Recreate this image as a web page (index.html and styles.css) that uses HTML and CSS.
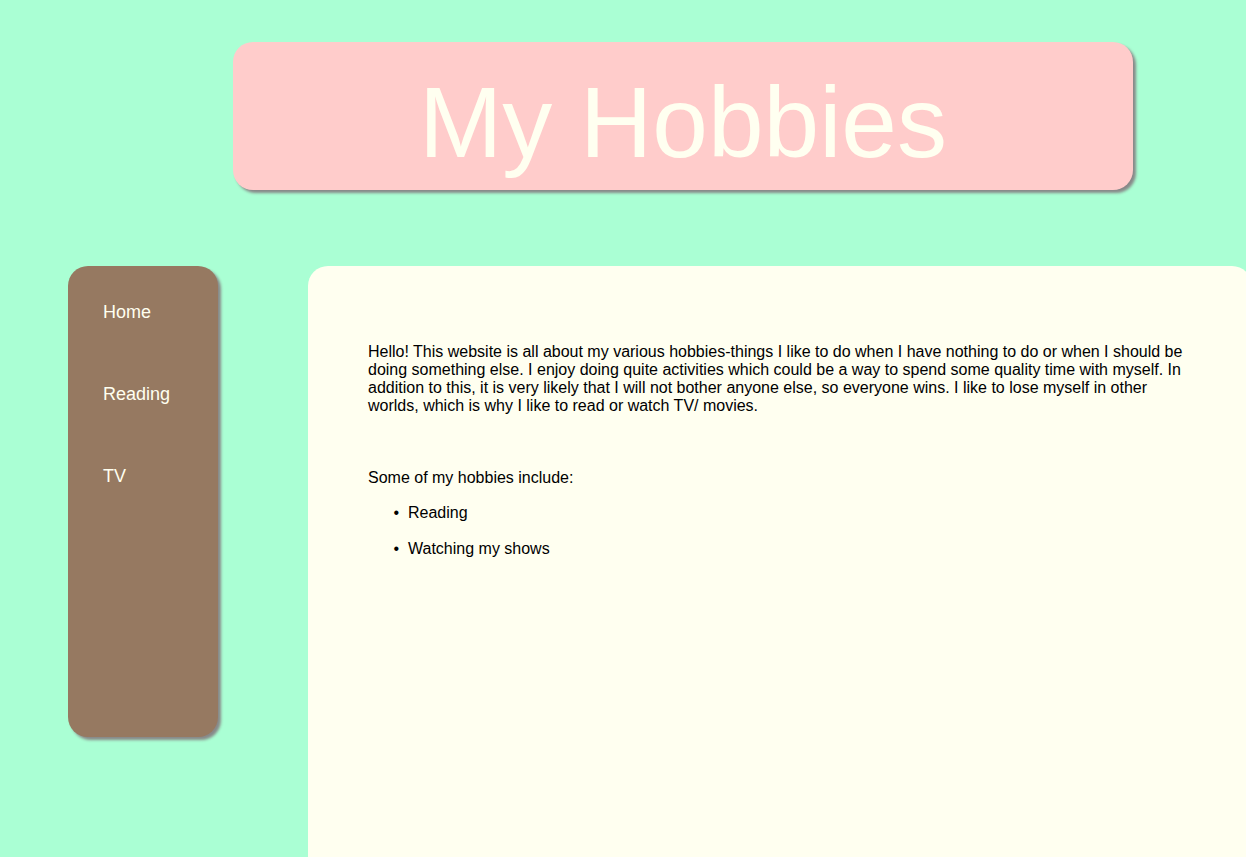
FILE: index.html
```html
<!DOCTYPE html>
<html>
<head>
<meta charset="utf-8">
<title>My Hobbies</title>
<link rel="stylesheet" href="styles.css">
</head>
<body>
<header class="banner">
  <h1 class="banner-title">My Hobbies</h1>
</header>
<div class="layout">
  <nav class="sidebar">
    <a class="nav-link" href="#">Home</a>
    <a class="nav-link" href="#">Reading</a>
    <a class="nav-link" href="#">TV</a>
  </nav>
  <main class="content">
    <p class="intro">Hello! This website is all about my various hobbies-things I like to do when I have nothing to do or when I should be doing something else. I enjoy doing quite activities which could be a way to spend some quality time with myself. In addition to this, it is very likely that I will not bother anyone else, so everyone wins. I like to lose myself in other worlds, which is why I like to read or watch TV/ movies.</p>
    <p class="lead">Some of my hobbies include:</p>
    <ul class="hobby-list">
      <li>Reading</li>
      <li>Watching my shows</li>
    </ul>
  </main>
</div>
</body>
</html>
```
FILE: styles.css
```css
html, body {
  margin: 0;
  padding: 0;
}
body {
  background: #aaffd4;
  font-family: "Liberation Sans", Arial, sans-serif;
  overflow: hidden;
  height: 857px;
}
.banner {
  box-sizing: border-box;
  width: 900px;
  height: 148px;
  margin: 42px 0 0 233px;
  background: #ffcccb;
  border-radius: 20px;
  box-shadow: 3px 3px 3px #888888;
  display: flex;
  align-items: center;
  justify-content: center;
  padding-top: 12px;
}
.banner-title {
  margin: 0;
  font-weight: normal;
  font-size: 100px;
  color: #fffff0;
  line-height: 1.15;
}
.layout {
  display: flex;
  align-items: flex-start;
  margin-top: 76px;
  margin-right: -6px;
}
.sidebar {
  box-sizing: border-box;
  width: 150px;
  height: 471px;
  margin-left: 68px;
  background: #967961;
  border-radius: 20px;
  box-shadow: 3px 3px 3px #888888;
  padding: 36px 0 0 35px;
  display: flex;
  flex-direction: column;
  gap: 61px;
}
.nav-link {
  color: #fffff0;
  text-decoration: none;
  font-size: 18px;
  line-height: 21px;
}
.content {
  flex: 1;
  box-sizing: border-box;
  margin-left: 90px;
  min-height: 620px;
  background: #fffff0;
  border-radius: 20px 20px 0 0;
  padding: 61px 62px 0 60px;
  font-size: 16px;
  color: #000;
}
.intro {
  margin: 16px 0 54px;
  line-height: 18px;
}
.lead {
  margin: 0 0 17px;
  line-height: 18px;
}
.hobby-list {
  margin: 0;
  padding-left: 40px;
  list-style-type: "•  ";
}
.hobby-list li {
  line-height: 18px;
}
.hobby-list li + li {
  margin-top: 18px;
}
```
